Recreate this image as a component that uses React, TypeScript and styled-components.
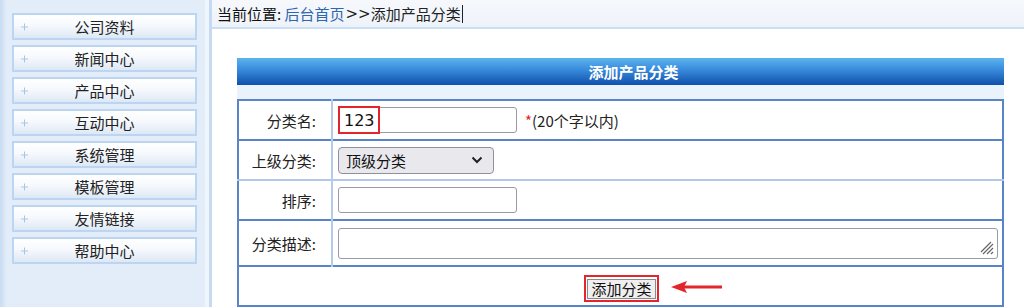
import React from "react";
import styled, { createGlobalStyle } from "styled-components";

const Global = createGlobalStyle`
  html, body { margin: 0; padding: 0; }
  body {
    font-family: "Noto Sans CJK SC", "Noto Sans", sans-serif;
    font-size: 15px;
    color: #222;
    background: #fff;
    overflow: hidden;
  }
`;

const Page = styled.div`
  display: flex;
  width: 1024px;
  height: 307px;
`;

const Sidebar = styled.aside`
  width: 205px;
  flex: none;
  background: linear-gradient(to right, #c9dcf2 0px, #e2edf9 7px, #e2edf9 100%);
  padding: 13px 8px 0 12px;
  box-sizing: border-box;
  display: flex;
  flex-direction: column;
  gap: 5px;
`;

const Divider = styled.div`
  width: 7px;
  flex: none;
  background: linear-gradient(to right, #eef5fd 0px, #eef5fd 4px, #c6dbf3 4px, #c6dbf3 7px);
`;

const MenuButton = styled.div`
  position: relative;
  height: 27px;
  box-sizing: border-box;
  border: 2px solid #bcd6f1;
  background: linear-gradient(to bottom, #ffffff 0%, #f6f9fd 45%, #dde8f5 100%);
  display: flex;
  align-items: center;
  justify-content: center;
  font-size: 15px;
  color: #222;
  line-height: 1;
`;

const Plus = styled.span`
  position: absolute;
  left: 7px;
  top: 50%;
  transform: translateY(-50%);
  width: 7px;
  height: 7px;
  &::before, &::after {
    content: "";
    position: absolute;
    background: #a9c4e4;
  }
  &::before { left: 3px; top: 0; width: 1px; height: 7px; }
  &::after { left: 0; top: 3px; width: 7px; height: 1px; }
`;

const Main = styled.main`
  flex: 1;
  display: flex;
  flex-direction: column;
  min-width: 0;
`;

const Crumbs = styled.div`
  height: 35px;
  box-sizing: border-box;
  border-bottom: 2px solid #cadff5;
  background: linear-gradient(to bottom, #f6f8fc, #eef3fa);
  padding: 0 0 0 5px;
  display: flex;
  align-items: center;
  font-size: 15px;
  color: #222;
`;

const CrumbLabel = styled.span`
  color: #111;
`;

const CrumbLink = styled.span`
  color: #2f66ad;
`;

const Sep = styled.span`
  font-family: "DejaVu Sans", sans-serif;
  font-size: 15px;
  margin-left: 1px;
`;

const Caret = styled.span`
  display: inline-block;
  width: 1px;
  height: 18px;
  background: #222;
  margin-left: 1px;
`;

const Content = styled.div`
  padding: 29px 20px 0 25px;
`;

const Panel = styled.div`
  width: 767px;
`;

const PanelHead = styled.div`
  height: 27px;
  background: linear-gradient(to bottom, #5db3ee 0%, #3b8ede 40%, #0f50ab 100%);
  color: #fff;
  font-weight: bold;
  font-size: 15px;
  display: flex;
  align-items: center;
  justify-content: center;
  padding-left: 26px;
`;

const PanelGap = styled.div`
  height: 14px;
  background: #eaf3fc;
`;

const FormTable = styled.table`
  width: 100%;
  table-layout: fixed;
  border-collapse: collapse;
  border: 2px solid #5a84c8;
`;

const Row = styled.tr<{ $h: number; $light?: boolean }>`
  height: ${(p) => p.$h}px;
  border-bottom: 2px solid ${(p) => (p.$light ? "#b3c8e8" : "#5a84c8")};
`;

const LabelCell = styled.td`
  width: 77px;
  padding: 0 15px 0 0;
  text-align: right;
  font-size: 15px;
  color: #222;
  border-right: 2px solid #b4cbec;
  white-space: nowrap;
`;

const ValueCell = styled.td`
  padding: 0 4px 0 5px;
  font-size: 15px;
  color: #222;
`;

const ButtonCell = styled.td`
  text-align: center;
  padding: 8px 0 0 0;
  vertical-align: top;
`;

const Field = styled.div`
  display: flex;
  align-items: center;
  gap: 8px;
`;

const TextInput = styled.div<{ $w: number }>`
  position: relative;
  width: ${(p) => p.$w}px;
  height: 26px;
  box-sizing: border-box;
  border: 1px solid #9a9aa8;
  border-radius: 3px;
  background: #fff;
  display: flex;
  align-items: center;
  padding-left: 5px;
  font-family: "DejaVu Sans", sans-serif;
  font-size: 16px;
  color: #111;
`;

const Highlight = styled.span`
  position: absolute;
  left: -1px;
  top: -2px;
  width: 42px;
  height: 28px;
  box-sizing: border-box;
  border: 2px solid #e3262b;
`;

const Hint = styled.span`
  color: #222;
  font-size: 15px;
`;

const Star = styled.span`
  color: #ee2222;
`;

const Select = styled.div`
  width: 156px;
  height: 27px;
  box-sizing: border-box;
  border: 1px solid #8f8f9d;
  border-radius: 4px;
  background: #e9e9ed;
  display: flex;
  align-items: center;
  justify-content: space-between;
  padding: 0 10px 0 7px;
  font-size: 15px;
  color: #111;
`;

const TextArea = styled.div`
  position: relative;
  width: 660px;
  height: 31px;
  box-sizing: border-box;
  border: 1px solid #9a9aa8;
  border-radius: 3px;
  background: #fff;
`;

const Grip = styled.svg`
  position: absolute;
  right: 3px;
  bottom: 3px;
`;

const ButtonWrap = styled.div`
  position: relative;
  display: inline-flex;
  align-items: center;
  margin-left: 2px;
`;

const RedBox = styled.span`
  display: inline-block;
  border: 2px solid #e3262b;
  padding: 1px;
`;

const SubmitButton = styled.span`
  display: inline-block;
  height: 18px;
  line-height: 18px;
  padding: 0 3px;
  background: #efefef;
  border: 1px solid #8a8a8a;
  font-size: 15px;
  color: #111;
`;

const Arrow = styled.svg`
  position: absolute;
  left: 86px;
  top: 4px;
`;

const menu = ["公司资料", "新闻中心", "产品中心", "互动中心", "系统管理", "模板管理", "友情链接", "帮助中心"];

export default function App() {
  return (
    <>
      <Global />
      <Page>
        <Sidebar>
          {menu.map((m) => (
            <MenuButton key={m}>
              <Plus />
              {m}
            </MenuButton>
          ))}
        </Sidebar>
        <Divider />
        <Main>
          <Crumbs>
            <CrumbLabel>当前位置:&nbsp;</CrumbLabel>
            <CrumbLink>后台首页</CrumbLink>
            <Sep>&gt;&gt;</Sep>
            <span>添加产品分类</span>
            <Caret />
          </Crumbs>
          <Content>
            <Panel>
              <PanelHead>添加产品分类</PanelHead>
              <PanelGap />
              <FormTable>
                <tbody>
                  <Row $h={40}>
                    <LabelCell>分类名:</LabelCell>
                    <ValueCell>
                      <Field>
                        <TextInput $w={179}>
                          123
                          <Highlight />
                        </TextInput>
                        <Hint>
                          <Star>*</Star>(20个字以内)
                        </Hint>
                      </Field>
                    </ValueCell>
                  </Row>
                  <Row $h={40} $light>
                    <LabelCell>上级分类:</LabelCell>
                    <ValueCell>
                      <Select>
                        <span>顶级分类</span>
                        <svg width="12" height="8" viewBox="0 0 12 8">
                          <path d="M1.5 1.5 L6 6 L10.5 1.5" fill="none" stroke="#222" strokeWidth="2" />
                        </svg>
                      </Select>
                    </ValueCell>
                  </Row>
                  <Row $h={40}>
                    <LabelCell>排序:</LabelCell>
                    <ValueCell>
                      <TextInput $w={179} />
                    </ValueCell>
                  </Row>
                  <Row $h={46}>
                    <LabelCell>分类描述:</LabelCell>
                    <ValueCell>
                      <TextArea>
                        <Grip width="14" height="14" viewBox="0 0 14 14">
                          <path d="M13 3 L3 13 M13 7 L7 13 M13 11 L11 13 M11 1 L1 11" stroke="#666" strokeWidth="1.2" fill="none" />
                        </Grip>
                      </TextArea>
                    </ValueCell>
                  </Row>
                  <Row $h={40}>
                    <ButtonCell colSpan={2}>
                      <ButtonWrap>
                        <RedBox>
                          <SubmitButton>添加分类</SubmitButton>
                        </RedBox>
                        <Arrow width="54" height="16" viewBox="0 0 54 16">
                          <path d="M52 8 L12 8" stroke="#e3262b" strokeWidth="3" />
                          <path d="M1 8 L17 2 L14 8 L17 14 Z" fill="#e3262b" />
                        </Arrow>
                      </ButtonWrap>
                    </ButtonCell>
                  </Row>
                </tbody>
              </FormTable>
            </Panel>
          </Content>
        </Main>
      </Page>
    </>
  );
}
